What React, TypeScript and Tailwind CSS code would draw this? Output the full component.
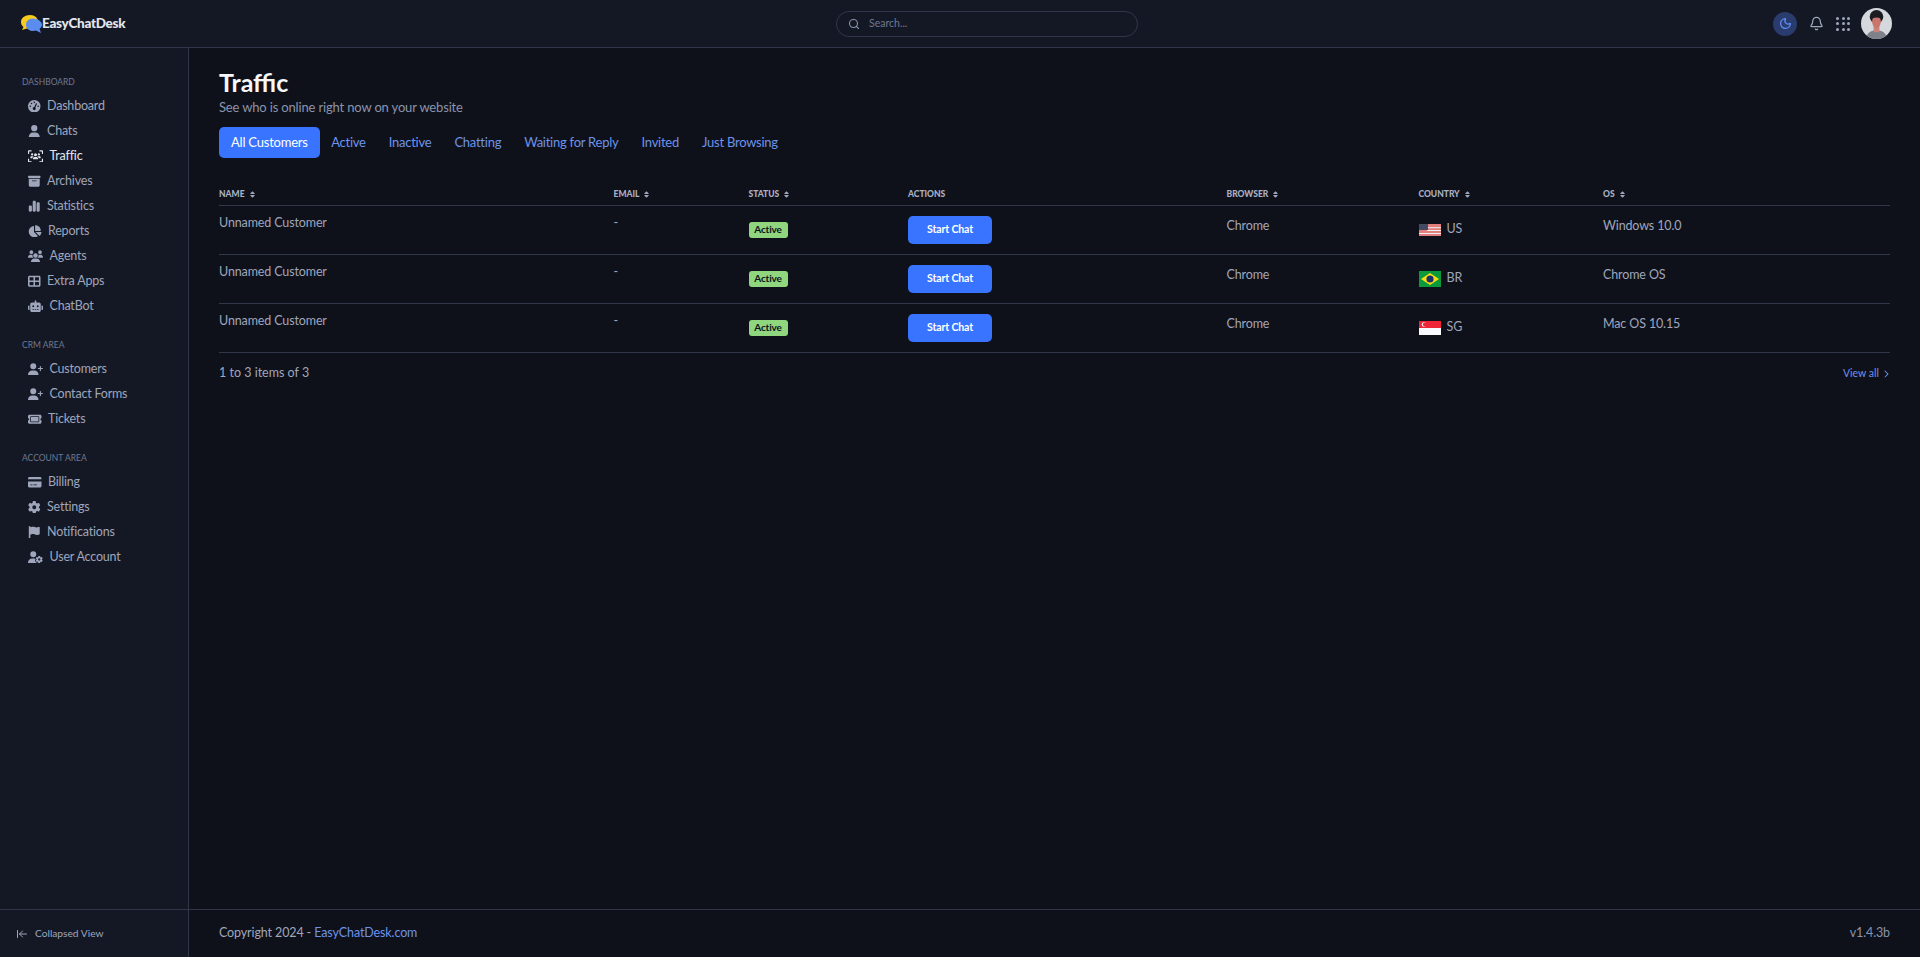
import type { ReactNode } from 'react';
import type { IconType } from 'react-icons';
import {
  FaGaugeHigh,
  FaUser,
  FaUsersViewfinder,
  FaBoxArchive,
  FaChartSimple,
  FaChartPie,
  FaUsers,
  FaTableCellsLarge,
  FaRobot,
  FaUserPlus,
  FaTicket,
  FaCreditCard,
  FaGear,
  FaFlag,
  FaUserGear,
  FaSort,
  FaChevronRight,
} from 'react-icons/fa6';
import { Search, Moon, Bell, ArrowLeftToLine } from 'lucide-react';

interface NavItem {
  label: string;
  icon: IconType;
  size: string;
  active?: boolean;
}

const narrow = 'w-[12.5px] h-[12.5px]';
const mid = 'w-[13.5px] h-[12.5px]';
const wide = 'w-[15px] h-[12.5px]';

const navGroups: { title: string; items: NavItem[] }[] = [
  {
    title: 'DASHBOARD',
    items: [
      { label: 'Dashboard', icon: FaGaugeHigh, size: narrow },
      { label: 'Chats', icon: FaUser, size: narrow },
      { label: 'Traffic', icon: FaUsersViewfinder, size: wide, active: true },
      { label: 'Archives', icon: FaBoxArchive, size: narrow },
      { label: 'Statistics', icon: FaChartSimple, size: narrow },
      { label: 'Reports', icon: FaChartPie, size: mid },
      { label: 'Agents', icon: FaUsers, size: wide },
      { label: 'Extra Apps', icon: FaTableCellsLarge, size: narrow },
      { label: 'ChatBot', icon: FaRobot, size: wide },
    ],
  },
  {
    title: 'CRM AREA',
    items: [
      { label: 'Customers', icon: FaUserPlus, size: wide },
      { label: 'Contact Forms', icon: FaUserPlus, size: wide },
      { label: 'Tickets', icon: FaTicket, size: mid },
    ],
  },
  {
    title: 'ACCOUNT AREA',
    items: [
      { label: 'Billing', icon: FaCreditCard, size: mid },
      { label: 'Settings', icon: FaGear, size: narrow },
      { label: 'Notifications', icon: FaFlag, size: narrow },
      { label: 'User Account', icon: FaUserGear, size: wide },
    ],
  },
];

const tabs = ['Active', 'Inactive', 'Chatting', 'Waiting for Reply', 'Invited', 'Just Browsing'];

function UsFlag() {
  return (
    <svg viewBox="0 0 22 12" className="w-[22px] h-3 shrink-0">
      <rect width="22" height="12" fill="#e07f7c" />
      <rect x="8" y="3.200" width="14" height="1" fill="#eef0f4" />
      <rect x="8" y="6" width="14" height="1" fill="#eef0f4" />
      <rect y="9" width="22" height="1" fill="#eef0f4" />
      <rect width="9" height="6" fill="#454a63" />
    </svg>
  );
}

function BrFlag() {
  return (
    <svg viewBox="0 0 22 16" className="w-[22px] h-4 shrink-0">
      <rect width="22" height="16" fill="#0a9a3c" />
      <polygon points="11,2 20,8 11,14 2,8" fill="#fbdc10" />
      <circle cx="11" cy="8" r="3.600" fill="#19306f" />
    </svg>
  );
}

function SgFlag() {
  return (
    <svg viewBox="0 0 22 14" className="w-[22px] h-[14px] shrink-0">
      <rect width="22" height="14" fill="#f8f9fe" />
      <rect width="22" height="7" fill="#ee2536" />
      <circle cx="5" cy="3.500" r="2.300" fill="#f8f9fe" />
      <circle cx="6" cy="3.500" r="2.100" fill="#ee2536" />
    </svg>
  );
}

const rows: { os: string; code: string; flag: ReactNode }[] = [
  { os: 'Windows 10.0', code: 'US', flag: <UsFlag /> },
  { os: 'Chrome OS', code: 'BR', flag: <BrFlag /> },
  { os: 'Mac OS 10.15', code: 'SG', flag: <SgFlag /> },
];

function Logo() {
  return (
    <svg viewBox="0 0 22 20" className="w-[22px] h-5 shrink-0">
      <path d="M10 1C5 1 1 4 1 8c0 2 1 4 2.500 5L2 16l5-1.500c1 .3 2 .5 3 .5 5 0 8-3 8-7s-3-7-8-7z" fill="#f7cb1e" />
      <path d="M13 4.500c-4 0-7 2.800-7 6.200s3 6.300 7 6.300c1 0 2-.2 3-.5l5 2.500-1.500-4.200c1.500-1 2.500-2.500 2.500-4.100 0-3.400-5-6.200-9-6.200z" fill="#5b8def" />
    </svg>
  );
}

function Avatar() {
  return (
    <svg viewBox="0 0 32 32" className="w-[31px] h-[31px] rounded-full shrink-0">
      <rect width="32" height="32" fill="#d5d8dd" />
      <path d="M5 32c1-7 6-9 11-9s10 2 11 9z" fill="#7d828a" />
      <rect x="13" y="17" width="6" height="8" fill="#c9837a" />
      <circle cx="16" cy="9" r="7" fill="#1c1d22" />
      <ellipse cx="16" cy="14" rx="4.500" ry="6.500" fill="#c9776d" />
      <path d="M11.500 12c0-3 9-3 9 0 0-3-2-5-4.500-5s-4.500 2-4.500 5z" fill="#1c1d22" />
    </svg>
  );
}

function SortHead({ label, sort = true }: { label: string; sort?: boolean }) {
  return (
    <span className="inline-flex items-center gap-[4px]">
      {label}
      {sort && <FaSort className="text-[7px] text-[#9fa6bc]" />}
    </span>
  );
}

export default function App() {
  return (
    <div
      className="h-screen w-full flex flex-col bg-[#0f111a] text-[#9fa6bc] overflow-hidden"
      style={{ fontFamily: 'Lato, sans-serif' }}
    >
      {/* Top bar */}
      <header className="h-[48px] shrink-0 flex items-center bg-[#141824] border-b border-[#31374a] pr-[28px]">
        <div className="w-[836px] flex items-center pl-[20px]">
          <Logo />
          <span className="text-[13.500px] font-black tracking-[-0.3px] text-[#e3e6ed]">EasyChatDesk</span>
        </div>
        <div className="w-[302px] h-[26px] rounded-full border border-[#31374a] flex items-center pl-[11px] gap-[9px]">
          <Search size={12} strokeWidth={2.2} className="text-[#8a94ad]" />
          <span className="text-[10.5px] text-[#6e7891]">Search...</span>
        </div>
        <div className="flex-1 flex items-center justify-end">
          <div className="w-6 h-6 rounded-full bg-[#2a3c6e] flex items-center justify-center">
            <Moon size={13} strokeWidth={2.4} className="text-[#5f8cf5]" />
          </div>
          <Bell size={15} className="ml-[12px] text-[#9fa6bc]" />
          <div className="ml-[12px] grid grid-cols-3 gap-[2.500px]">
            {[0, 1, 2, 3, 4, 5, 6, 7, 8].map((d) => (
              <span key={d} className="w-[3px] h-[3px] rounded-full bg-[#9fa6bc]" />
            ))}
          </div>
          <div className="ml-[11px]">
            <Avatar />
          </div>
        </div>
      </header>

      <div className="flex-1 flex min-h-0">
        {/* Sidebar */}
        <aside className="w-[189px] shrink-0 flex flex-col bg-[#141824] border-r border-[#31374a]">
          <nav className="flex-1 pt-[27px] pl-[22px]">
            {navGroups.map((group) => (
              <div key={group.title} className="mb-[19.500px]">
                <p className="text-[8.500px] leading-[14px] text-[#6e7891] mb-[4.500px]">{group.title}</p>
                {group.items.map((item) => (
                  <a
                    key={item.label}
                    className={`h-[25px] flex items-center gap-[6.500px] pl-[6px] text-[12.500px] tracking-[-0.2px] ${
                      item.active ? 'text-[#e3e6ed]' : 'text-[#9fa6bc]'
                    }`}
                  >
                    <item.icon className={`${item.size} shrink-0`} />
                    {item.label}
                  </a>
                ))}
              </div>
            ))}
          </nav>
          <div className="h-[48px] shrink-0 border-t border-[#31374a] flex items-center pl-[16px] gap-[7px] text-[10.200px] text-[#9fa6bc]">
            <ArrowLeftToLine size={12} />
            Collapsed View
          </div>
        </aside>

        {/* Main */}
        <main className="flex-1 flex flex-col min-w-0">
          <div className="flex-1 pl-[30px] pr-[30px] pt-[19px]">
            <h1 className="text-[25px] leading-[30px] font-bold text-[#f5f7fa]">Traffic</h1>
            <p className="text-[13px] tracking-[-0.16px] leading-[18px] mt-[1px] text-[#8a94ad]">See who is online right now on your website</p>

            <div className="flex items-center mt-[11px]">
              <button className="h-[31px] px-[12px] rounded-[5px] bg-[#3874ff] text-white text-[13px] tracking-[-0.22px]">All Customers</button>
              {tabs.map((t) => (
                <a key={t} className="px-[11.500px] text-[13px] tracking-[-0.25px] text-[#6d93ea]">
                  {t}
                </a>
              ))}
            </div>

            <table className="w-full table-fixed mt-[23px] border-collapse">
              <thead>
                <tr className="h-[24px] border-b border-[#31374a] text-[8.500px] font-bold text-[#a9b0c4] text-left align-middle [&>th]:pt-[3px] [&>th]:font-black">
                  <th className="w-[394.500px]"><SortHead label="NAME" /></th>
                  <th className="w-[135px]"><SortHead label="EMAIL" /></th>
                  <th className="w-[159.500px]"><SortHead label="STATUS" /></th>
                  <th className="w-[318.500px]"><SortHead label="ACTIONS" sort={false} /></th>
                  <th className="w-[192px]"><SortHead label="BROWSER" /></th>
                  <th className="w-[184.500px]"><SortHead label="COUNTRY" /></th>
                  <th><SortHead label="OS" /></th>
                </tr>
              </thead>
              <tbody>
                {rows.map((r) => (
                  <tr key={r.code} className="h-[49px] border-b border-[#31374a] text-[12.500px] tracking-[-0.13px] text-[#9fa6bc]">
                    <td className="align-top pt-[8.500px] leading-[18px]">Unnamed Customer</td>
                    <td className="align-top pt-[8.500px] leading-[18px]">-</td>
                    <td className="align-middle">
                      <span className="inline-flex items-center justify-center w-[39px] h-[16px] rounded-[3px] bg-[#90d67f] text-[#0f111a] text-[10px] font-bold">
                        Active
                      </span>
                    </td>
                    <td className="align-middle">
                      <button className="w-[84px] h-[28px] rounded-[5px] bg-[#3874ff] text-white text-[10.500px] font-bold">
                        Start Chat
                      </button>
                    </td>
                    <td className="align-top pt-[11px] leading-[18px]">Chrome</td>
                    <td className="align-middle">
                      <span className="flex items-center gap-[6px]">
                        {r.flag}
                        {r.code}
                      </span>
                    </td>
                    <td className="align-top pt-[11px] leading-[18px]">{r.os}</td>
                  </tr>
                ))}
              </tbody>
            </table>

            <div className="flex items-center justify-between mt-[12px] h-[18px]">
              <span className="text-[12.500px] text-[#9fa6bc]">1 to 3 items of 3</span>
              <a className="flex items-center gap-[3px] text-[10.500px] text-[#6d93ea]">
                View all
                <FaChevronRight className="text-[8px]" />
              </a>
            </div>
          </div>

          <footer className="h-[48px] shrink-0 border-t border-[#31374a] flex items-center justify-between px-[30px] text-[12.500px] tracking-[-0.12px]">
            <span>
              Copyright 2024 - <a className="text-[#6d93ea]">EasyChatDesk.com</a>
            </span>
            <span className="text-[#8a94ad]">v1.4.3b</span>
          </footer>
        </main>
      </div>
    </div>
  );
}
